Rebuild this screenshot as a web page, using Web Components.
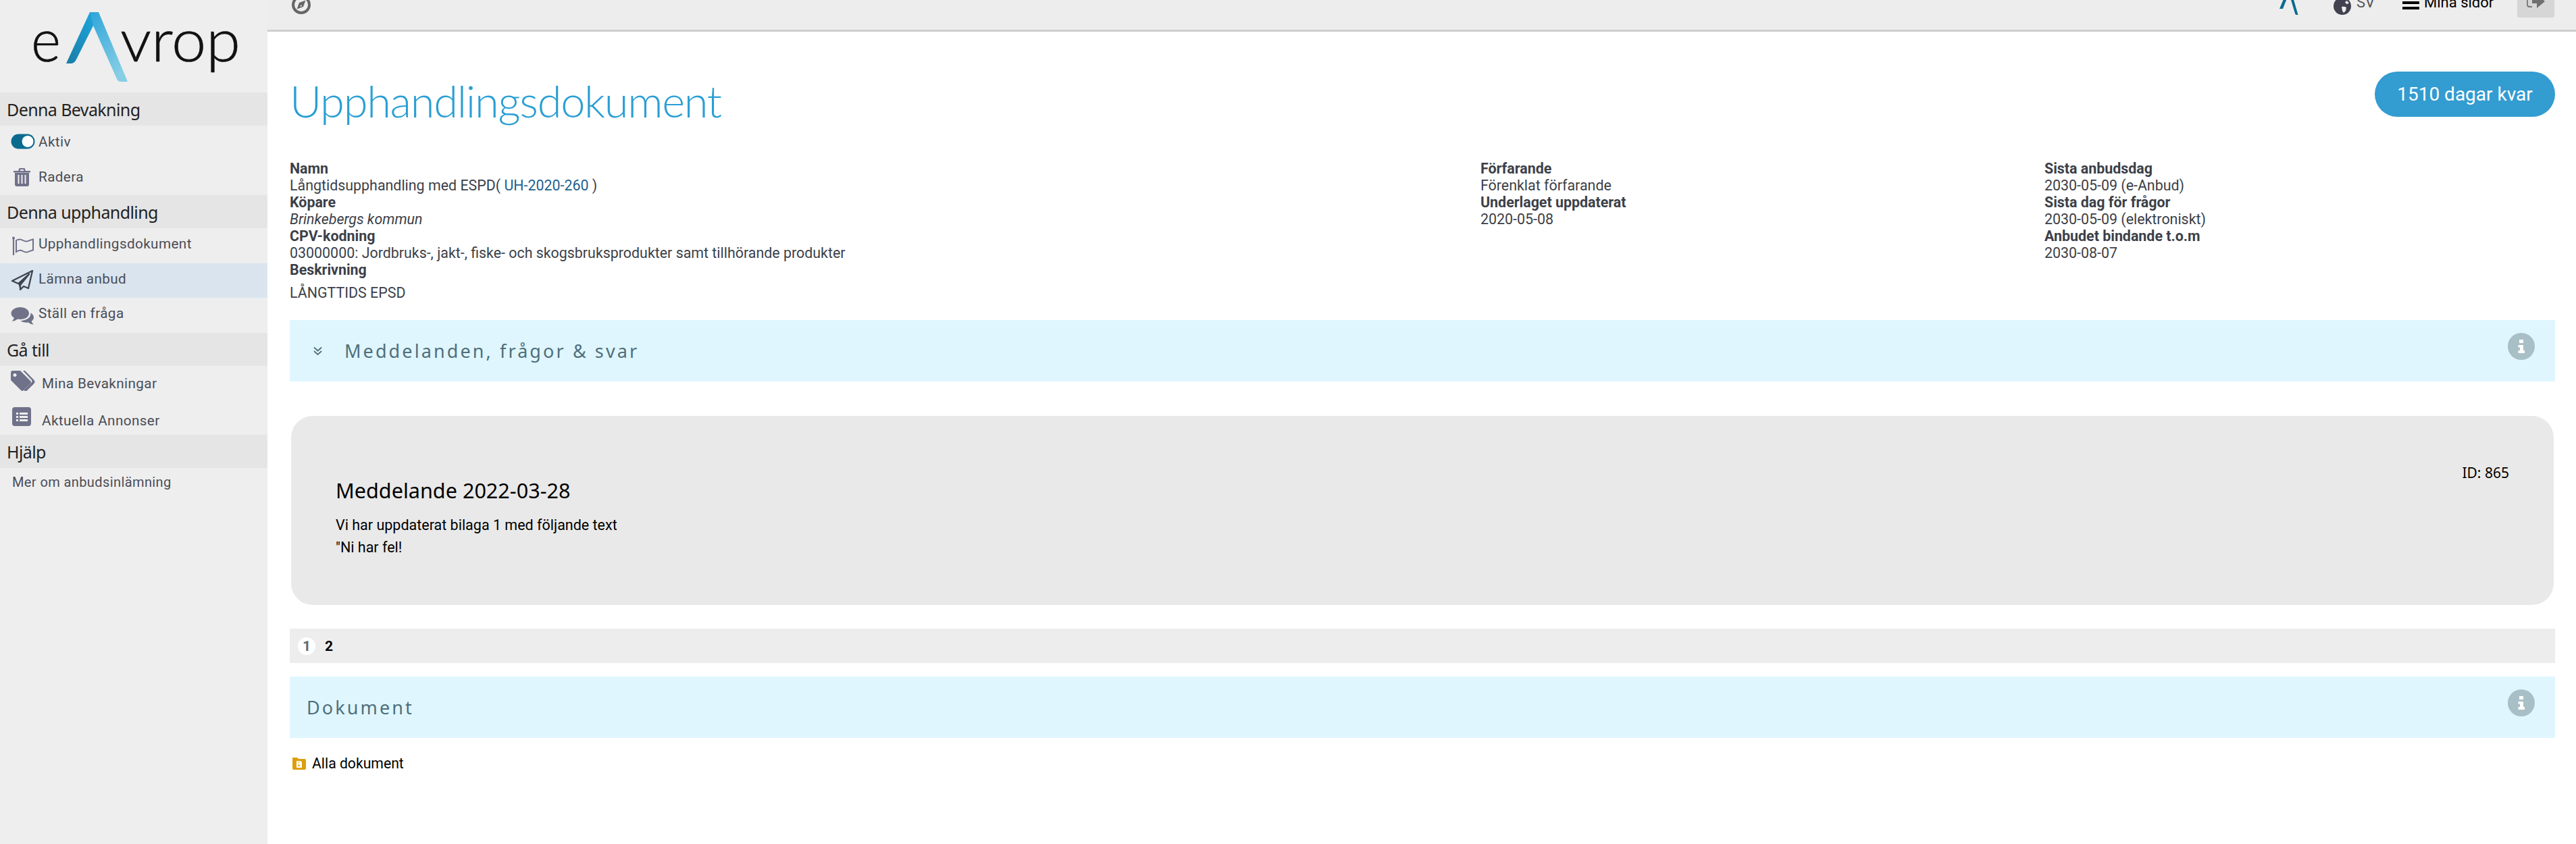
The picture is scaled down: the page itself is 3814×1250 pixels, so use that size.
<!DOCTYPE html>
<html lang="sv">
<head>
<meta charset="utf-8">
<title>Upphandlingsdokument</title>
<style>
  html, body { margin: 0; height: 100%; overflow: hidden; background: #fff; }
  body { font-family: Roboto, "Liberation Sans", sans-serif; }
</style>
</head>
<body>
<ea-app>
  <ea-sidebar slot="side">
    <ea-side-heading>Denna Bevakning</ea-side-heading>
    <ea-side-item style="--h:49px;--pb:2px">
      <svg slot="icon" width="36" height="24" viewBox="0 0 36 24" style="margin-top:1px"><rect x="0.5" y="0.5" width="35" height="22" rx="11" fill="#0b6b8f"/><circle cx="25" cy="11.5" r="9" fill="#fff" stroke="#0b6b8f" stroke-width="1"/></svg>
      Aktiv
    </ea-side-item>
    <ea-side-item style="--h:54px">
      <svg slot="icon" width="36" height="28" viewBox="0 0 36 28"><g fill="#70728a"><path d="M4 5h25v2.500H4z"/><path d="M11 5l1.500-4h8l1.500 4h-2.500l-.8-2h-4.400l-.8 2z"/><path fill-rule="evenodd" d="M6 8h21v17q0 3-3 3H9q-3 0-3-3zM10.500 11v13h2V11zM15.500 11v13h2V11zM20.500 11v13h2V11z"/></g></svg>
      Radera
    </ea-side-item>
    <ea-side-heading>Denna upphandling</ea-side-heading>
    <ea-side-item style="--h:52px;--pb:6px">
      <svg slot="icon" width="36" height="28" viewBox="0 0 36 28" style="margin-top:6px"><g fill="none" stroke="#70728a"><path stroke-width="2.200" d="M4 2v26"/><path stroke-width="2" d="M8 6q5-3 10 0t10 0q3-1 5-1.500v16q-2 .5-5 1.500q-5 3-10 0t-10 1z"/></g><circle cx="4" cy="2.500" r="2" fill="#70728a"/></svg>
      Upphandlingsdokument
    </ea-side-item>
    <ea-side-item active style="--h:51px;--pb:5px">
      <svg slot="icon" width="36" height="30" viewBox="0 0 36 30" style="margin-top:4px"><path d="M32 1L2 16l9 4 16-14-13 16v7l5-5 7 3z" fill="none" stroke="#3f4450" stroke-width="2.300" stroke-linejoin="round"/><path d="M11 20l3 9v-7l13-16z" fill="#3f4450"/></svg>
      Lämna anbud
    </ea-side-item>
    <ea-side-item style="--h:52px;--pb:6px">
      <svg slot="icon" width="36" height="28" viewBox="0 0 36 28" style="margin-top:7px"><g fill="#70728a"><path d="M14 1c7.500 0 13 4 13 9s-5.500 9-13 9c-1.500 0-2.700-.1-4-.4C8 20.500 5 21.600 1.500 22c2-1.800 3-3.500 3.300-5.200C2 15 0.500 12.700 0.500 10 0.500 5 6.500 1 14 1z"/><path d="M29.500 9.500c3 1.600 4.500 4 4.500 6.500 0 2.500-1.400 4.400-3.300 5.800.4 1.600 1.400 3.200 3.300 5-3.300-.4-6-1.500-8-3.300-1 .2-2 .3-3 .3-3.400 0-6.500-1-8.500-2.800 8.500-.2 15.500-4.500 15-11.500z"/></g></svg>
      Ställ en fråga
    </ea-side-item>
    <ea-side-heading>Gå till</ea-side-heading>
    <ea-side-item style="--h:55px;--pb:3px;--text-x:5px">
      <svg slot="icon" width="36" height="30" viewBox="0 0 36 30" style="margin-bottom:9px"><g fill="#70728a"><path fill-rule="evenodd" d="M3 0h11l15 15q2 2 0 4L19 29q-2 2-4 0L0 14V3q0-3 3-3zM6 4a2.500 2.500 0 1 0 .01 0z"/><path d="M18 0h3l13.500 14q2 2.500 0 5L24 29.500q-2 1-4 0l-1-.5L31 17q1-1.500 0-3z"/></g></svg>
      Mina Bevakningar
    </ea-side-item>
    <ea-side-item style="--h:47px;--pt:5px;--text-x:5px">
      <svg slot="icon" width="36" height="28" viewBox="0 0 36 28" style="margin:0 0 13px 2px"><path fill-rule="evenodd" fill="#70728a" d="M4 0h20q4 0 4 4v20q0 4-4 4H4q-4 0-4-4V4q0-4 4-4zM6 8v3h3V8zM11 8v3h12V8zM6 13v3h3v-3zM11 13v3h12v-3zM6 18v3h3v-3zM11 18v3h12v-3z"/></svg>
      Aktuella Annonser
    </ea-side-item>
    <ea-side-heading>Hjälp</ea-side-heading>
    <ea-side-link>Mer om anbudsinlämning</ea-side-link>
  </ea-sidebar>

  <ea-topbar slot="top"></ea-topbar>

  <ea-title-row days="1510 dagar kvar">Upphandlingsdokument</ea-title-row>

  <ea-meta-grid>
    <div>
      <ea-field label="Namn">Långtidsupphandling med ESPD( <span style="color:#1f5f8f">UH-2020-260</span> )</ea-field>
      <ea-field label="Köpare"><i>Brinkebergs kommun</i></ea-field>
      <ea-field label="CPV-kodning">03000000: Jordbruks-, jakt-, fiske- och skogsbruksprodukter samt tillhörande produkter</ea-field>
      <ea-field label="Beskrivning" style="--value-gap:9px">LÅNGTTIDS EPSD</ea-field>
    </div>
    <div>
      <ea-field label="Förfarande">Förenklat förfarande</ea-field>
      <ea-field label="Underlaget uppdaterat">2020-05-08</ea-field>
    </div>
    <div>
      <ea-field label="Sista anbudsdag">2030-05-09 (e-Anbud)</ea-field>
      <ea-field label="Sista dag för frågor">2030-05-09 (elektroniskt)</ea-field>
      <ea-field label="Anbudet bindande t.o.m">2030-08-07</ea-field>
    </div>
  </ea-meta-grid>

  <ea-panel chevron>Meddelanden, frågor &amp; svar</ea-panel>

  <ea-message heading="Meddelande 2022-03-28" msgid="ID: 865">
    <div>Vi har uppdaterat bilaga 1 med följande text</div>
    <div>"Ni har fel!</div>
  </ea-message>

  <ea-pager></ea-pager>

  <ea-panel style="--panel-top:20px">Dokument</ea-panel>

  <ea-doc-link>Alla dokument</ea-doc-link>
</ea-app>

<script>
const titleFont = `"Noto Sans", "Open Sans", sans-serif`;

class EaApp extends HTMLElement {
  constructor() {
    super();
    this.attachShadow({ mode: "open" }).innerHTML = `
      <style>
        :host { display: flex; width: 3814px; height: 1250px; overflow: hidden; background: #fff; }
        .side { flex: 0 0 396px; background: #eee; }
        .main { flex: 1; min-width: 0; display: flex; flex-direction: column; }
        .content { padding: 0 31px 0 33px; display: flex; flex-direction: column; }
      </style>
      <div class="side"><slot name="side"></slot></div>
      <div class="main">
        <slot name="top"></slot>
        <div class="content"><slot></slot></div>
      </div>`;
  }
}

class EaSidebar extends HTMLElement {
  constructor() {
    super();
    this.attachShadow({ mode: "open" }).innerHTML = `
      <style>
        :host { display: block; }
        .logo { height: 137px; }
        text { font-family: Lato, "Noto Sans", sans-serif; font-weight: 300; font-size: 88px; fill: #111; stroke: #111; stroke-width: .6px; }
      </style>
      <div class="logo">
        <svg width="396" height="137" viewBox="0 0 396 137">
          <defs>
            <linearGradient id="l" x1="0" y1="1" x2="0.8" y2="0"><stop offset="0" stop-color="#1a7ca6"/><stop offset="1" stop-color="#1da4da"/></linearGradient>
            <linearGradient id="r" x1="0" y1="0" x2="0.6" y2="1"><stop offset="0" stop-color="#2ea5d8"/><stop offset="1" stop-color="#86cee5"/></linearGradient>
          </defs>
          <text x="46" y="91" textLength="44" lengthAdjust="spacingAndGlyphs">e</text>
          <path fill="url(#l)" d="M133 18h9l-4 20-25 50q-3 6-8 6h-7z"/>
          <path fill="url(#r)" d="M133 18h13l43 103h-10q-4 0-6-4l-35-79z"/>
          <text x="178" y="91" textLength="178" lengthAdjust="spacingAndGlyphs">vrop</text>
        </svg>
      </div>
      <slot></slot>`;
  }
}

class EaSideHeading extends HTMLElement {
  constructor() {
    super();
    this.attachShadow({ mode: "open" }).innerHTML = `
      <style>
        :host { display: flex; align-items: center; height: 49px; padding-left: 10px; background: #e5e5e5;
          color: #222; font: 400 25px ${titleFont}; letter-spacing: -.6px; }
      </style>
      <slot></slot>`;
  }
}

class EaSideItem extends HTMLElement {
  constructor() {
    super();
    this.attachShadow({ mode: "open" }).innerHTML = `
      <style>
        :host { display: flex; align-items: center; box-sizing: border-box; height: var(--h, 52px);
          padding: var(--pt, 0) 0 var(--pb, 0) 16px; color: #4a4d57;
          font: 400 20.7px Roboto, sans-serif; letter-spacing: .4px; }
        :host([active]) { background: #d9e4ee; }
        .icon { flex: 0 0 41px; display: flex; }
        .text { margin-left: var(--text-x, 0); }
      </style>
      <span class="icon"><slot name="icon"></slot></span>
      <span class="text"><slot></slot></span>`;
  }
}

class EaSideLink extends HTMLElement {
  constructor() {
    super();
    this.attachShadow({ mode: "open" }).innerHTML = `
      <style>
        :host { display: block; padding: 9px 0 0 18px; color: #4a4d57; font: 400 20px/24px Roboto, sans-serif; letter-spacing: .4px; }
      </style>
      <slot></slot>`;
  }
}

class EaTopbar extends HTMLElement {
  constructor() {
    super();
    this.attachShadow({ mode: "open" }).innerHTML = `
      <style>
        :host { display: flex; align-items: flex-end; box-sizing: border-box; height: 47px; overflow: hidden;
          background: #ededed; border-bottom: 3px solid #cecece; padding: 0 32px 0 36px; font: 400 22px/24px Roboto, sans-serif; }
        .compass { margin-bottom: 22px; }
        .right { margin-left: auto; display: flex; align-items: flex-end; }
        .mark { margin-bottom: 22px; }
        .globe { margin: 0 8px 22px 51px; }
        .sv { color: #555; margin-bottom: 28px; width: 44px; }
        .burger { display: flex; flex-direction: column; gap: 4px; width: 25px; margin: 0 7px 30px 24px; }
        .burger i { display: block; height: 4px; background: #000; }
        .pages { color: #000; margin-bottom: 28px; width: 99px; white-space: nowrap; }
        .out { display: flex; justify-content: center; align-items: flex-end; box-sizing: border-box; width: 55px; height: 30px; padding-bottom: 13px; margin: 0 0 18px 39px; background: #d6d6d6; border-radius: 3px; }
      </style>
      <svg class="compass" width="30" height="30" viewBox="0 0 30 30"><circle cx="14" cy="15" r="12" fill="none" stroke="#666" stroke-width="4"/><path d="M20.500 8.500l-3.500 9.500-9.500 3.500 3.500-9.500z" fill="#666"/><path d="M14 15l-2 3 3-1z" fill="#ededed"/></svg>
      <div class="right">
        <svg class="mark" width="30" height="40" viewBox="0 0 30 40"><path d="M14 0h3l11.500 40h-2.500q-1.500 0-2-2L15 8 6 31h-5z" fill="#0b6b8f"/></svg>
        <svg class="globe" width="26" height="26" viewBox="0 0 26 26"><circle cx="13" cy="13" r="13" fill="#41414f"/><path d="M12 14q4-1 7 1l-1 5-3 3-2-3zM20 5l3 4-4 1-2-3z" fill="#ededed"/></svg>
        <span class="sv">SV</span>
        <span class="burger"><i></i><i></i></span>
        <span class="pages">Mina sidor</span>
        <span class="out"><svg width="28" height="22" viewBox="0 0 28 22"><path d="M8 1H4q-3 0-3 3v12q0 3 3 3h4" fill="none" stroke="#7a756f" stroke-width="1.800"/><path d="M8 8h7V1l12 10-12 10v-7H8z" fill="#6f6f6f"/></svg></span>
      </div>`;
  }
}

class EaTitleRow extends HTMLElement {
  constructor() {
    super();
    this.attachShadow({ mode: "open" });
  }
  connectedCallback() {
    this.shadowRoot.innerHTML = `
      <style>
        :host { display: flex; justify-content: space-between; align-items: flex-start; height: 190px; }
        h1 { margin: 0; padding-top: 62px; color: #2a9fd4; font: 300 65px/80px Lato, sans-serif; letter-spacing: -1.3px; }
        .pill { margin-top: 59px; box-sizing: border-box; height: 67px; width: 267px; border-radius: 34px; background: #339cd0;
          color: #fff; font: 400 28px/67px Roboto, sans-serif; text-align: center; }
      </style>
      <h1><slot></slot></h1>
      <div class="pill">${this.getAttribute("days")}</div>`;
  }
}

class EaMetaGrid extends HTMLElement {
  constructor() {
    super();
    this.attachShadow({ mode: "open" }).innerHTML = `
      <style>
        :host { display: grid; grid-template-columns: 1763px 835px 1fr; height: 209px; margin-top: 0; }
      </style>
      <slot></slot>`;
  }
}

class EaField extends HTMLElement {
  constructor() {
    super();
    this.attachShadow({ mode: "open" });
  }
  connectedCallback() {
    this.shadowRoot.innerHTML = `
      <style>
        :host { display: block; color: #3c3f48; font: 400 21.4px/25px Roboto, sans-serif; }
        b { display: block; font-weight: 700; }
        .value { margin-top: var(--value-gap, 0); }
      </style>
      <b>${this.getAttribute("label")}</b>
      <div class="value"><slot></slot></div>`;
  }
}

class EaPanel extends HTMLElement {
  constructor() {
    super();
    this.attachShadow({ mode: "open" });
  }
  connectedCallback() {
    const chevron = this.hasAttribute("chevron");
    this.shadowRoot.innerHTML = `
      <style>
        :host { display: flex; align-items: center; box-sizing: border-box; height: 91px; margin-top: var(--panel-top, 28px);
          background: #dff6ff; color: #4f6f7a; padding: 0 30px 0 ${chevron ? 35 : 25}px;
          font: 400 27px ${titleFont}; letter-spacing: 3.1px; }
        .chev { margin-right: 33px; }
        .info { margin: 0 0 13px auto; }
      </style>
      ${chevron ? `<svg class="chev" width="13" height="14" viewBox="0 0 13 14"><path d="M1 1.500l5.500 5 5.500-5M1 7l5.500 5 5.500-5" fill="none" stroke="#4f6f7a" stroke-width="1.800"/></svg>` : ""}
      <slot></slot>
      <svg class="info" width="40" height="40" viewBox="0 0 40 40"><circle cx="20" cy="20" r="20" fill="#a8bfc6"/><path d="M17 10h6v5h-6zM15.500 18h7.500v8h2v4H15.500v-4h2.500v-4.500h-2.500z" fill="#fff"/></svg>`;
  }
}

class EaMessage extends HTMLElement {
  constructor() {
    super();
    this.attachShadow({ mode: "open" });
  }
  connectedCallback() {
    this.shadowRoot.innerHTML = `
      <style>
        :host { display: block; box-sizing: border-box; height: 280px; margin: 51px 2px 0 2px; padding: 76px 66px 0 66px;
          background: #e9e9e9; border-radius: 32px; color: #000; font: 400 21.5px/33px Roboto, sans-serif; }
        .top { display: flex; justify-content: space-between; align-items: flex-start; }
        h2 { margin: 14px 0 14px; font: 400 30.6px/41px ${titleFont}; }
        .id { margin-top: -4px; font: 400 21px/25px ${titleFont}; }
      </style>
      <div class="top"><h2>${this.getAttribute("heading")}</h2><span class="id">${this.getAttribute("msgid")}</span></div>
      <slot></slot>`;
  }
}

class EaPager extends HTMLElement {
  constructor() {
    super();
    this.attachShadow({ mode: "open" }).innerHTML = `
      <style>
        :host { display: flex; align-items: center; gap: 14px; box-sizing: border-box; height: 51px; margin-top: 35px; padding-left: 12px;
          background: #ededed; font: 700 21px Roboto, sans-serif; }
        .cur { display: block; width: 26px; height: 26px; border-radius: 50%; background: #fff; color: #5a6c75; text-align: center; line-height: 26px; }
        .next { color: #000; }
      </style>
      <span class="cur">1</span><span class="next">2</span>`;
  }
}

class EaDocLink extends HTMLElement {
  constructor() {
    super();
    this.attachShadow({ mode: "open" }).innerHTML = `
      <style>
        :host { display: flex; align-items: center; gap: 9px; margin-top: 25px; padding-left: 4px; color: #000; font: 400 21.2px/26px Roboto, sans-serif; }
      </style>
      <svg width="20" height="18" viewBox="0 0 20 18"><path d="M1 0h6l2 2h9q2 0 2 2v12q0 2-2 2H2q-2 0-2-2V1q0-1 1-1z" fill="#dd9f0c"/><path fill="#fff" d="M6 5h6l2 2v8H6z"/><path fill="#dd9f0c" d="M9 6h1v2H9zM8.500 10h2v3h-2z"/></svg>
      <slot></slot>`;
  }
}

customElements.define("ea-app", EaApp);
customElements.define("ea-sidebar", EaSidebar);
customElements.define("ea-side-heading", EaSideHeading);
customElements.define("ea-side-item", EaSideItem);
customElements.define("ea-side-link", EaSideLink);
customElements.define("ea-topbar", EaTopbar);
customElements.define("ea-title-row", EaTitleRow);
customElements.define("ea-meta-grid", EaMetaGrid);
customElements.define("ea-field", EaField);
customElements.define("ea-panel", EaPanel);
customElements.define("ea-message", EaMessage);
customElements.define("ea-pager", EaPager);
customElements.define("ea-doc-link", EaDocLink);
</script>
</body>
</html>
